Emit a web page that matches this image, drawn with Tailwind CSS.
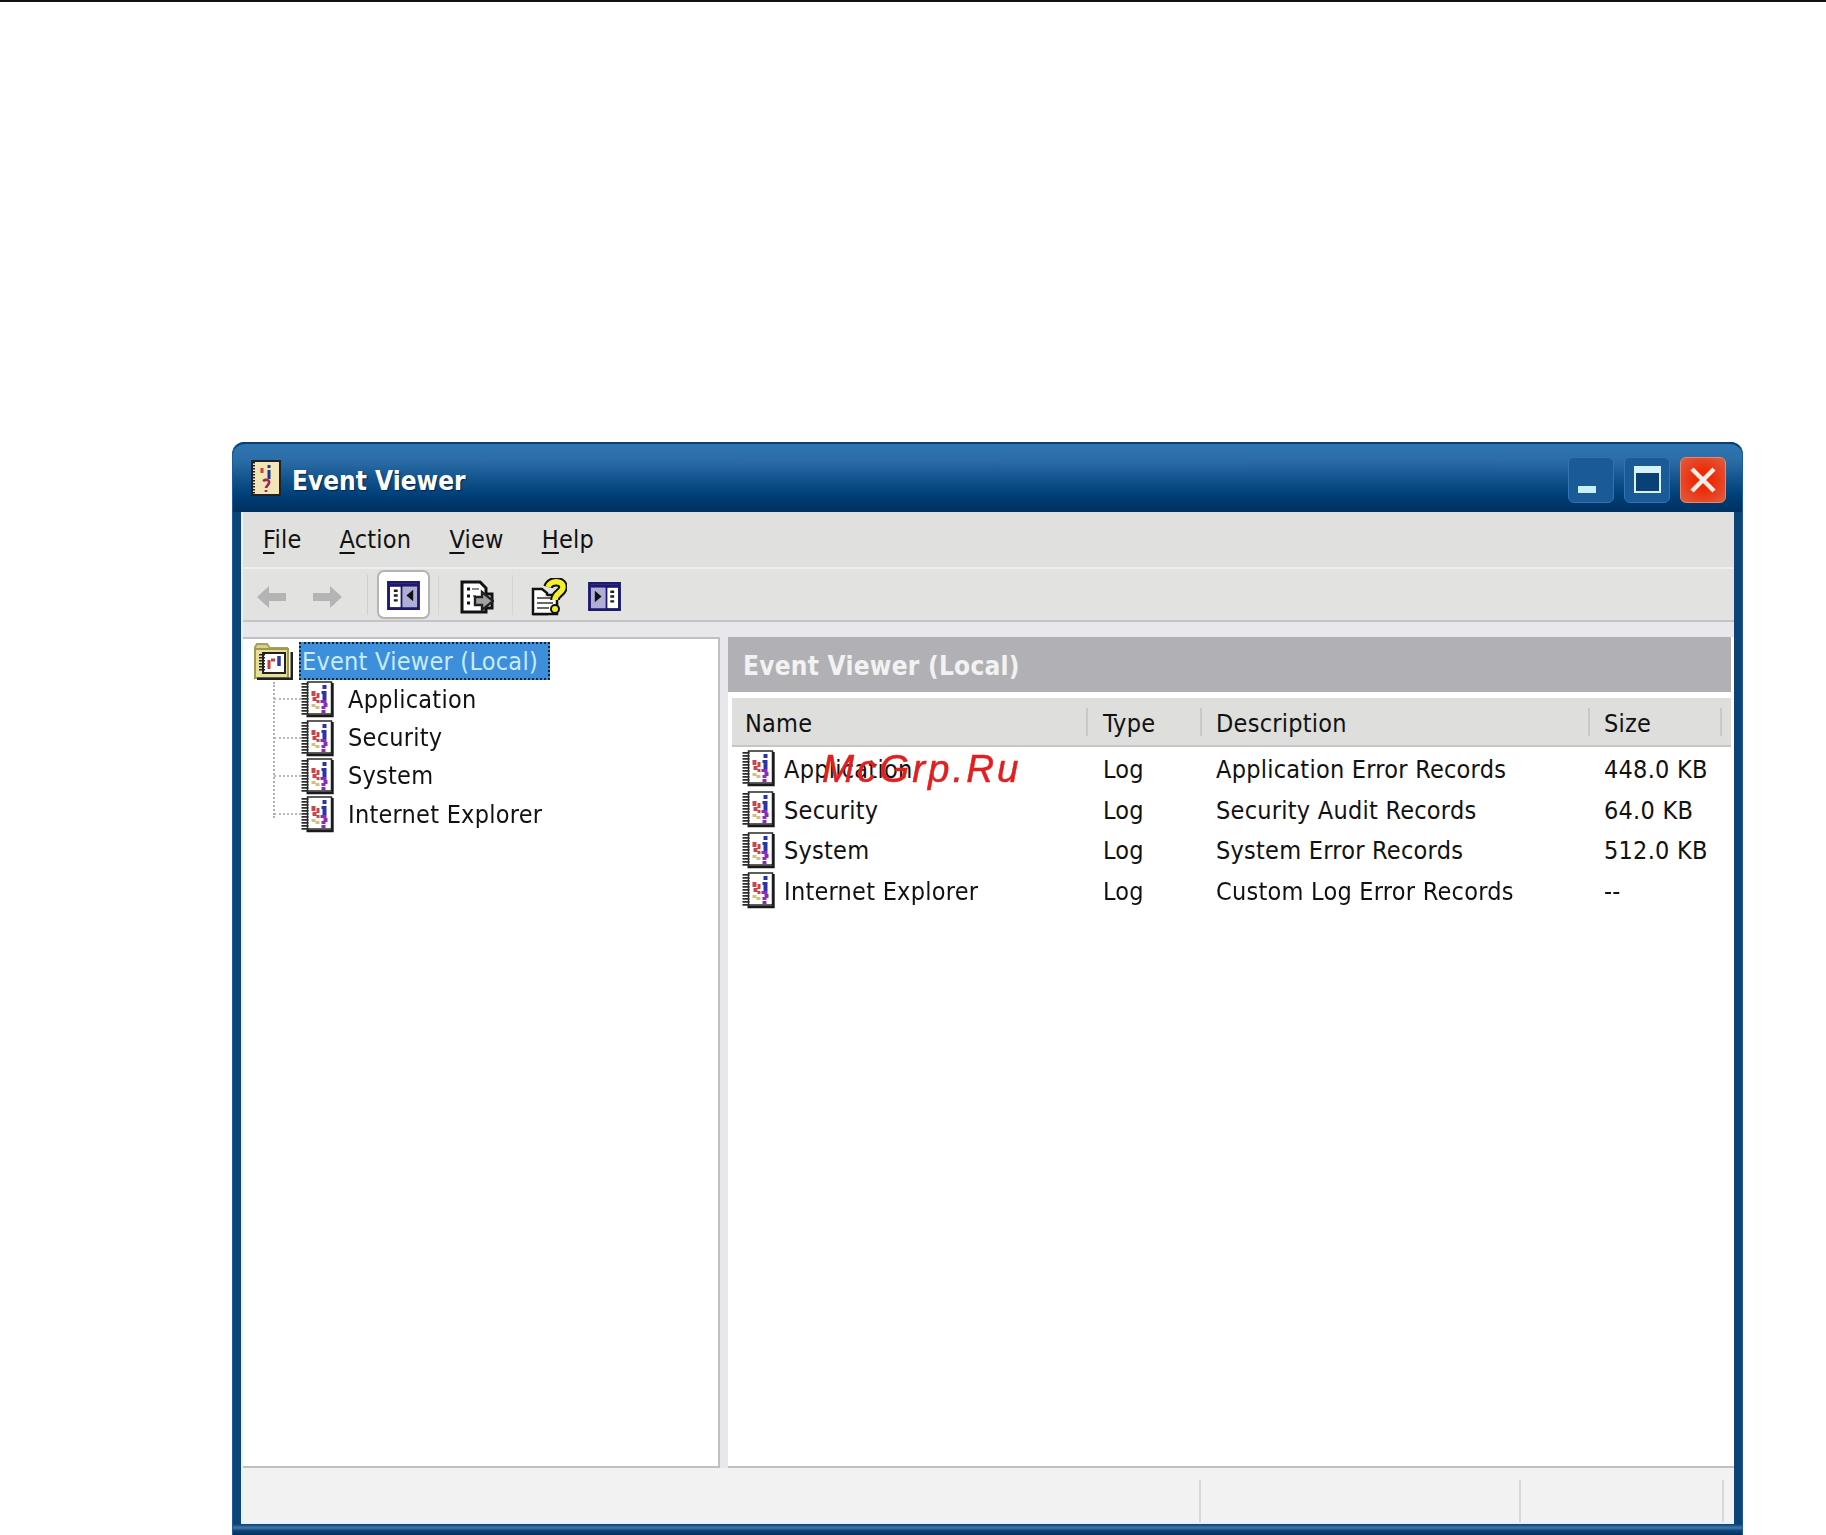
<!DOCTYPE html>
<html lang="en">
<head>
    <meta charset="UTF-8">
    <title>Event Viewer</title>
    <script src="https://cdn.jsdelivr.net/npm/@tailwindcss/browser@4"></script>
</head>
<body class="bg-white font-['DejaVu_Sans',sans-serif] font-stretch-condensed text-[25px] tracking-[0.25px] leading-none text-[#111] overflow-hidden h-[1535px]">
    <svg width="0" height="0" class="absolute">
        <defs>
            <!-- log book icon -->
            <symbol id="book" viewBox="0 0 32 38">
                <path d="M6 2H30V34H6Z" fill="#fff" stroke="#2a2a2a" stroke-width="1.5"/>
                <path d="M5 36H31V3" fill="none" stroke="#1a1a1a" stroke-width="2.4"/>
                <path d="M3.5 3V35" stroke="#2c2c2c" stroke-width="7" stroke-dasharray="1.7 1.3"/>
                <path d="M10 11h4v5h-4ZM15 13h3v5h-3ZM11 17h4v4h-4ZM15 20h3v3h-3Z" fill="#cc4448"/>
                <path d="M10 24h4v3h-4ZM14 26h4v3h-4Z" fill="#d6c080"/>
                <path d="M21 5h4v4h-4ZM20 11h5v3h-5ZM21 14h4v6h-4Z" fill="#2a34a8"/>
                <path d="M19 20h6v3h-6ZM22 23h4v4h-4ZM20 26h4v3h-4ZM20 30h4v3h-4Z" fill="#8b2cb8"/>
            </symbol>
            <!-- split pane toolbar icon -->
            <symbol id="pane" viewBox="0 0 34 30">
                <rect x="1.5" y="1.5" width="31" height="27" fill="#fff" stroke="#1d1a6e" stroke-width="3"/>
                <rect x="3" y="3" width="28" height="3" fill="#1d1a6e"/>
                <rect x="16" y="6" width="15" height="21" fill="#aeaed6"/>
                <path d="M15 5v23" stroke="#1d1a6e" stroke-width="2"/>
                <path d="M7 10h4M7 15h4M7 20h4" stroke="#222" stroke-width="2.5"/>
                <path d="M27 9v12l-7-6Z" fill="#111"/>
            </symbol>
        </defs>
    </svg>

    <div class="h-[2px] bg-[#111]"></div>

    <!-- window -->
    <div class="blur-[0.6px] relative ml-[232px] mt-[440px] w-[1511px] h-[1093px] flex flex-col rounded-t-[12px] bg-[#0c4477] border-x border-[#1b5d97]">
        <!-- title bar -->
        <div class="h-[70px] shrink-0 flex items-center pl-[18px] pr-[16px] rounded-t-[12px] border-t-2 border-[#0b3f7a] bg-[linear-gradient(180deg,#2f76b0_0%,#2a6ca6_25%,#14558f_50%,#003f78_75%,#00305f_100%)]">
            <svg class="w-[30px] h-[36px]" viewBox="0 0 30 36">
                <rect x="1" y="1" width="28" height="34" fill="#f2e6b8" stroke="#222" stroke-width="2"/>
                <path d="M2 2v32" stroke="#222" stroke-width="4" stroke-dasharray="1.5 1.5"/>
                <path d="M11 8v5" stroke="#c84040" stroke-width="3"/>
                <path d="M18 5v3M18 10v9" stroke="#1a3a90" stroke-width="3"/>
                <path d="M12 21c3-2 7-1 6 2s-3 3-3 5M15 30v2" fill="none" stroke="#9a2a50" stroke-width="2.6"/>
            </svg>
            <span class="ml-[11px] mt-[6px] font-bold text-white text-[26px] tracking-normal [text-shadow:1px_1px_1px_#00264d]">Event Viewer</span>
            <div class="ml-auto flex gap-[10px] mt-[3px]">
                <div class="w-[46px] h-[46px] rounded-[6px] border border-[#2f74ae] bg-[#1a5a96] flex items-end justify-start pl-[9px] pb-[9px]">
                    <div class="w-[18px] h-[7px] bg-[#c8f0fa]"></div>
                </div>
                <div class="w-[46px] h-[46px] rounded-[6px] border border-[#2f74ae] bg-[#1a5a96] flex items-center justify-center">
                    <div class="w-[27px] h-[27px] border-2 border-t-[7px] border-[#d8f2fa] bg-[#0b4077]"></div>
                </div>
                <div class="w-[46px] h-[46px] rounded-[6px] border border-[#e08a70] bg-[radial-gradient(circle,#f02a08_30%,#dc6040_100%)] flex items-center justify-center">
                    <svg class="w-[30px] h-[30px]" viewBox="0 0 30 30"><path d="M4 4L26 26M26 4L4 26" stroke="#fbeee6" stroke-width="4.5"/></svg>
                </div>
            </div>
        </div>

        <!-- client area -->
        <div class="flex-1 flex flex-col mx-[8px] bg-[#e8e8ec] border-l-2 border-[#e6f3fc]">
            <!-- menu -->
            <div class="h-[55px] shrink-0 bg-[#e0e0de] flex items-center gap-[38px] pl-[20px]">
                <span><u class="underline-offset-4">F</u>ile</span>
                <span><u class="underline-offset-4">A</u>ction</span>
                <span><u class="underline-offset-4">V</u>iew</span>
                <span><u class="underline-offset-4">H</u>elp</span>
            </div>
            <!-- toolbar -->
            <div class="h-[55px] shrink-0 bg-[#e2e2e0] border-t-2 border-[#eeeeee] border-b-2 border-b-[#c4c4c4] flex items-center pl-[14px]">
                <svg class="w-[29px] h-[24px] mt-[4px]" viewBox="0 0 29 24"><path d="M0 12L12 1V8H29V16H12V23Z" fill="#b4b4b4"/></svg>
                <svg class="w-[29px] h-[24px] ml-[27px] mt-[4px]" viewBox="0 0 29 24"><path d="M29 12L17 1V8H0V16H17V23Z" fill="#b4b4b4"/></svg>
                <div class="w-px h-[40px] bg-[#cfcfcf] ml-[25px]"></div>
                <div class="ml-[9px] w-[53px] h-[49px] rounded-[7px] bg-white border-2 border-[#b4b4b4] flex items-center justify-center">
                    <svg class="w-[33px] h-[29px] mt-[2px]"><use href="#pane"/></svg>
                </div>
                <div class="w-px h-[40px] bg-[#d4d4d4] ml-[8px]"></div>
                <svg class="w-[34px] h-[34px] ml-[21px] mt-[4px]" viewBox="0 0 34 34">
                    <path d="M2 2H20L26 8V14H32V28H26V32H2Z" fill="#fff" stroke="#111" stroke-width="3"/>
                    <path d="M7 9h3M7 16h3M7 23h3" stroke="#111" stroke-width="3"/>
                    <path d="M12 9h7M13 16h3" stroke="#888" stroke-width="2"/>
                    <path d="M15 17H22V12L33 21 22 30V25H15Z" fill="#a0a0a0" stroke="#222" stroke-width="2.4"/>
                </svg>
                <div class="w-px h-[40px] bg-[#d4d4d4] ml-[18px]"></div>
                <svg class="w-[36px] h-[38px] ml-[18px] mt-[4px]" viewBox="0 0 36 38">
                    <path d="M2 11H11L16 15V36H2Z" fill="#fff" stroke="#111" stroke-width="2.5"/>
                    <path d="M16 17H26V36H2" fill="#fff" stroke="#111" stroke-width="2.5"/>
                    <path d="M6 20h16M6 25h16M6 30h12" stroke="#666" stroke-width="2"/>
                    <path d="M17 9c2-7 15-7 15 0 0 6-8 6-8 13" fill="none" stroke="#111" stroke-width="9.5"/>
                    <path d="M17 9c2-7 15-7 15 0 0 6-8 6-8 13" fill="none" stroke="#f5ee2a" stroke-width="5.5"/>
                    <circle cx="24" cy="31" r="4" fill="#f5ee2a" stroke="#111" stroke-width="2"/>
                </svg>
                <svg class="w-[33px] h-[29px] ml-[21px] mt-[4px] -scale-x-100"><use href="#pane"/></svg>
            </div>

            <!-- panes -->
            <div class="mt-[15px] h-[831px] shrink-0 flex gap-[8px]">
                <!-- tree -->
                <div class="relative w-[477px] shrink-0 bg-white border-t-2 border-r-2 border-b-2 border-[#c0c0c0] pl-[11px] pt-[3px]">
                    <div class="absolute left-[30px] top-[43px] h-[136px] border-l-2 border-dotted border-[#b0b0b0]"></div>
                    <div class="flex items-center h-[38px]">
                        <svg class="w-[39px] h-[37px]" viewBox="0 0 39 37">
                            <path d="M1 8V4L3 1H13L16 5H33V8" fill="#d8cf90" stroke="#a8a060" stroke-width="2"/>
                            <rect x="1" y="6" width="33" height="29" fill="#e6df98" stroke="#a09850" stroke-width="2"/>
                            <path d="M3 36H38V9" fill="none" stroke="#222" stroke-width="3"/>
                            <rect x="9" y="10" width="22" height="20" fill="#fff" stroke="#222" stroke-width="2"/>
                            <path d="M8 11v18" stroke="#222" stroke-width="6" stroke-dasharray="1.5 1.5"/>
                            <path d="M15 17v9M17 17h4" stroke="#c8403c" stroke-width="3"/>
                            <path d="M25 13v10" stroke="#2a3aa0" stroke-width="3.5"/>
                        </svg>
                        <div class="ml-[6px] w-[251px] h-[38px] flex items-center pl-[3px] bg-[#3d8fdc] text-[#c8ecff] outline-2 -outline-offset-2 outline-dotted outline-[#10243c]">Event Viewer (Local)</div>
                    </div>
                    <div class="flex items-center h-[38.4px] pl-[20px]"><span class="w-[27px] border-t-2 border-dotted border-[#b8b8b8]"></span><svg class="w-[33px] h-[38px]"><use href="#book"/></svg><span class="ml-[14px]">Application</span></div>
                    <div class="flex items-center h-[38.4px] pl-[20px]"><span class="w-[27px] border-t-2 border-dotted border-[#b8b8b8]"></span><svg class="w-[33px] h-[38px]"><use href="#book"/></svg><span class="ml-[14px]">Security</span></div>
                    <div class="flex items-center h-[38.4px] pl-[20px]"><span class="w-[27px] border-t-2 border-dotted border-[#b8b8b8]"></span><svg class="w-[33px] h-[38px]"><use href="#book"/></svg><span class="ml-[14px]">System</span></div>
                    <div class="flex items-center h-[38.4px] pl-[20px]"><span class="w-[27px] border-t-2 border-dotted border-[#b8b8b8]"></span><svg class="w-[33px] h-[38px]"><use href="#book"/></svg><span class="ml-[14px]">Internet Explorer</span></div>
                </div>

                <!-- detail -->
                <div class="flex-1 flex flex-col bg-white border-b-2 border-[#c0c0c0] pr-[3px]">
                    <div class="h-[55px] shrink-0 bg-[#b1b1b5] flex items-center pl-[15px] pt-[2px] font-bold text-[#f2f2f2] text-[26px]">Event Viewer (Local)</div>
                    <div class="mt-[6px] ml-[4px] h-[49px] shrink-0 bg-[#dededc] border-b-2 border-[#c6c6c6] grid grid-cols-[356px_114px_388px_132px_1fr] items-center">
                        <div class="pl-[13px] pt-[3px] h-[28px] flex items-center border-r-2 border-[#c8c8c8]">Name</div>
                        <div class="pl-[15px] pt-[3px] h-[28px] flex items-center border-r-2 border-[#c8c8c8]">Type</div>
                        <div class="pl-[14px] pt-[3px] h-[28px] flex items-center border-r-2 border-[#c8c8c8]">Description</div>
                        <div class="pl-[14px] pt-[3px] h-[28px] flex items-center border-r-2 border-[#c8c8c8]">Size</div>
                    </div>
                    <div class="ml-[4px] flex flex-col pt-[1px]">
                        <div class="h-[40.7px] grid grid-cols-[356px_114px_388px_132px] items-center">
                            <div class="pl-[10px] flex items-center"><svg class="w-[33px] h-[38px]"><use href="#book"/></svg><span class="ml-[9px] mt-[2px]">Application</span></div>
                            <div class="pl-[15px] mt-[2px]">Log</div><div class="pl-[14px] mt-[2px]">Application Error Records</div><div class="pl-[14px] mt-[2px]">448.0 KB</div>
                        </div>
                        <div class="h-[40.7px] grid grid-cols-[356px_114px_388px_132px] items-center">
                            <div class="pl-[10px] flex items-center"><svg class="w-[33px] h-[38px]"><use href="#book"/></svg><span class="ml-[9px] mt-[2px]">Security</span></div>
                            <div class="pl-[15px] mt-[2px]">Log</div><div class="pl-[14px] mt-[2px]">Security Audit Records</div><div class="pl-[14px] mt-[2px]">64.0 KB</div>
                        </div>
                        <div class="h-[40.7px] grid grid-cols-[356px_114px_388px_132px] items-center">
                            <div class="pl-[10px] flex items-center"><svg class="w-[33px] h-[38px]"><use href="#book"/></svg><span class="ml-[9px] mt-[2px]">System</span></div>
                            <div class="pl-[15px] mt-[2px]">Log</div><div class="pl-[14px] mt-[2px]">System Error Records</div><div class="pl-[14px] mt-[2px]">512.0 KB</div>
                        </div>
                        <div class="h-[40.7px] grid grid-cols-[356px_114px_388px_132px] items-center">
                            <div class="pl-[10px] flex items-center"><svg class="w-[33px] h-[38px]"><use href="#book"/></svg><span class="ml-[9px] mt-[2px]">Internet Explorer</span></div>
                            <div class="pl-[15px] mt-[2px]">Log</div><div class="pl-[14px] mt-[2px]">Custom Log Error Records</div><div class="pl-[14px] mt-[2px]">--</div>
                        </div>
                    </div>
                </div>
            </div>

            <!-- status bar -->
            <div class="flex-1 bg-[#f2f2f2] border-b-2 border-[#e6f3fc] flex items-stretch pt-[12px]">
                <div class="w-[958px] border-r-2 border-[#d8d8d8]"></div>
                <div class="w-[320px] border-r-2 border-[#d8d8d8]"></div>
                <div class="w-[203px] border-r-2 border-[#d8d8d8]"></div>
            </div>
        </div>
        <div class="h-[11px] shrink-0 bg-[linear-gradient(180deg,#0b3f72_0%,#3f78ab_35%,#0c4477_60%,#00305f_100%)]"></div>
    </div>

    <!-- watermark -->
    <div class="absolute left-[822px] top-[746px] italic text-[38.5px] leading-[46px] tracking-[3px] text-[#e02020] font-['Liberation_Sans',sans-serif] font-stretch-normal [-webkit-text-stroke:0.5px_#e02020]">McGrp.Ru</div>
</body>
</html>
